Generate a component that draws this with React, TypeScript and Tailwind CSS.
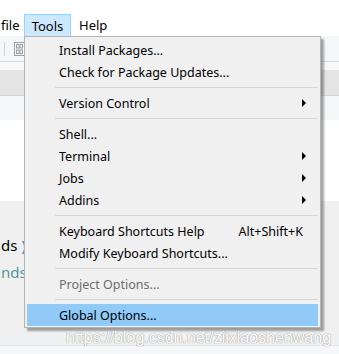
import React from "react";

type Item =
  | { kind: "item"; label: string; arrow?: boolean; shortcut?: string; disabled?: boolean; active?: boolean }
  | { kind: "sep" };

const items: Item[] = [
  { kind: "item", label: "Install Packages..." },
  { kind: "item", label: "Check for Package Updates..." },
  { kind: "sep" },
  { kind: "item", label: "Version Control", arrow: true },
  { kind: "sep" },
  { kind: "item", label: "Shell..." },
  { kind: "item", label: "Terminal", arrow: true },
  { kind: "item", label: "Jobs", arrow: true },
  { kind: "item", label: "Addins", arrow: true },
  { kind: "sep" },
  { kind: "item", label: "Keyboard Shortcuts Help", shortcut: "Alt+Shift+K" },
  { kind: "item", label: "Modify Keyboard Shortcuts..." },
  { kind: "sep" },
  { kind: "item", label: "Project Options...", disabled: true },
  { kind: "sep" },
  { kind: "item", label: "Global Options...", active: true },
];

function Arrow() {
  return (
    <svg width="5" height="8" viewBox="0 0 5 8" className="shrink-0">
      <path d="M0 0 L4 4 L0 8 Z" fill="#000" />
    </svg>
  );
}

export default function App() {
  return (
    <div
      className="relative w-[339px] h-[354px] overflow-hidden bg-white text-black"
      style={{ fontFamily: '"Noto Sans", "Liberation Sans", sans-serif' }}
    >
      {/* menu bar */}
      <div className="h-[36px] bg-white flex items-end text-[13px]">
        <div className="h-[22px] flex items-center pt-[2px] pl-[1px] w-[24px]">file</div>
        <div className="h-[22px] w-[47px] flex items-center justify-center pt-[2px] bg-[#cce8ff] border border-[#99d1ff] border-b-0">Tools</div>
        <div className="h-[22px] flex items-center pt-[2px] pl-[8px]">Help</div>
      </div>
      {/* toolbar */}
      <div className="h-[26px] bg-[#f4f6f7] flex items-center border-b border-[#d6dadc]">
        <div className="w-px h-[14px] bg-[#cfd3d6] ml-[4px]" />
        <svg width="11" height="14" viewBox="0 0 11 14" className="ml-[9px]">
          <rect x="0.5" y="0.5" width="10" height="13" fill="none" stroke="#9aa0a6" />
          <rect x="2.5" y="2.5" width="2.5" height="3.5" fill="none" stroke="#9aa0a6" />
          <rect x="6" y="2.5" width="2.5" height="3.5" fill="none" stroke="#9aa0a6" />
          <rect x="2.5" y="8" width="2.5" height="3.5" fill="none" stroke="#9aa0a6" />
          <rect x="6" y="8" width="2.5" height="3.5" fill="none" stroke="#9aa0a6" />
        </svg>
      </div>
      <div className="h-[8px] bg-[#f6f8f9]" />
      <div className="h-[26px] bg-[#e4e4e4] border-b border-[#d3d6d8]" />
      <div className="h-[24px] bg-[#f5f7f8]" />
      <div className="h-[81px] bg-white" />
      <div className="h-[144px] bg-[#f0f0f0] text-[15px] leading-none flex flex-col">
        <div className="mt-[37px] pl-[1px] flex">
          <span>ds</span>
          <span className="text-[#2f6fc0] ml-[4px]">)</span>
        </div>
        <div className="mt-[12px] pl-[1px] text-[#4e9a9a]">nds</div>
      </div>
      <div className="h-px bg-[#e2e4e5]" />
      <div className="h-[10px] bg-[#f5f7f8]" />

      {/* dropdown menu */}
      <div className="absolute left-[24px] top-[36px] w-[297px] bg-[#f0f0f0] border border-[#b4b4b4] pt-[2px] pb-[1px] px-[2px] shadow-[3px_3px_2px_rgba(0,0,0,0.35)] text-[12.5px]">
        {items.map((it, i) =>
          it.kind === "sep" ? (
            <div key={i} className="h-[9px] flex items-center pl-[28px]">
              <div className="h-px w-full bg-[#d7d7d7]" />
            </div>
          ) : (
            <div
              key={i}
              className={
                "h-[22px] flex items-center pl-[32px] pr-[11px] " +
                (it.active ? "bg-[#91c9f7] " : "") +
                (it.disabled ? "text-[#6d6d6d]" : "text-black")
              }
            >
              <span className="pt-[3px]">{it.label}</span>
              <span className="flex-1" />
              {it.shortcut && <span className="pt-[3px] mr-[4px]">{it.shortcut}</span>}
              {it.arrow && <Arrow />}
            </div>
          )
        )}
      </div>

      {/* watermark */}
      <div
        className="absolute left-[66px] top-[330px] text-[16px] leading-none text-white [text-shadow:0_0_1px_#9a9a9a,0_0_1px_#9a9a9a]"
        style={{ fontFamily: '"Liberation Sans", Arial, sans-serif' }}
      >
        https://blog.csdn.net/ziixiaoshenwang
      </div>
    </div>
  );
}
